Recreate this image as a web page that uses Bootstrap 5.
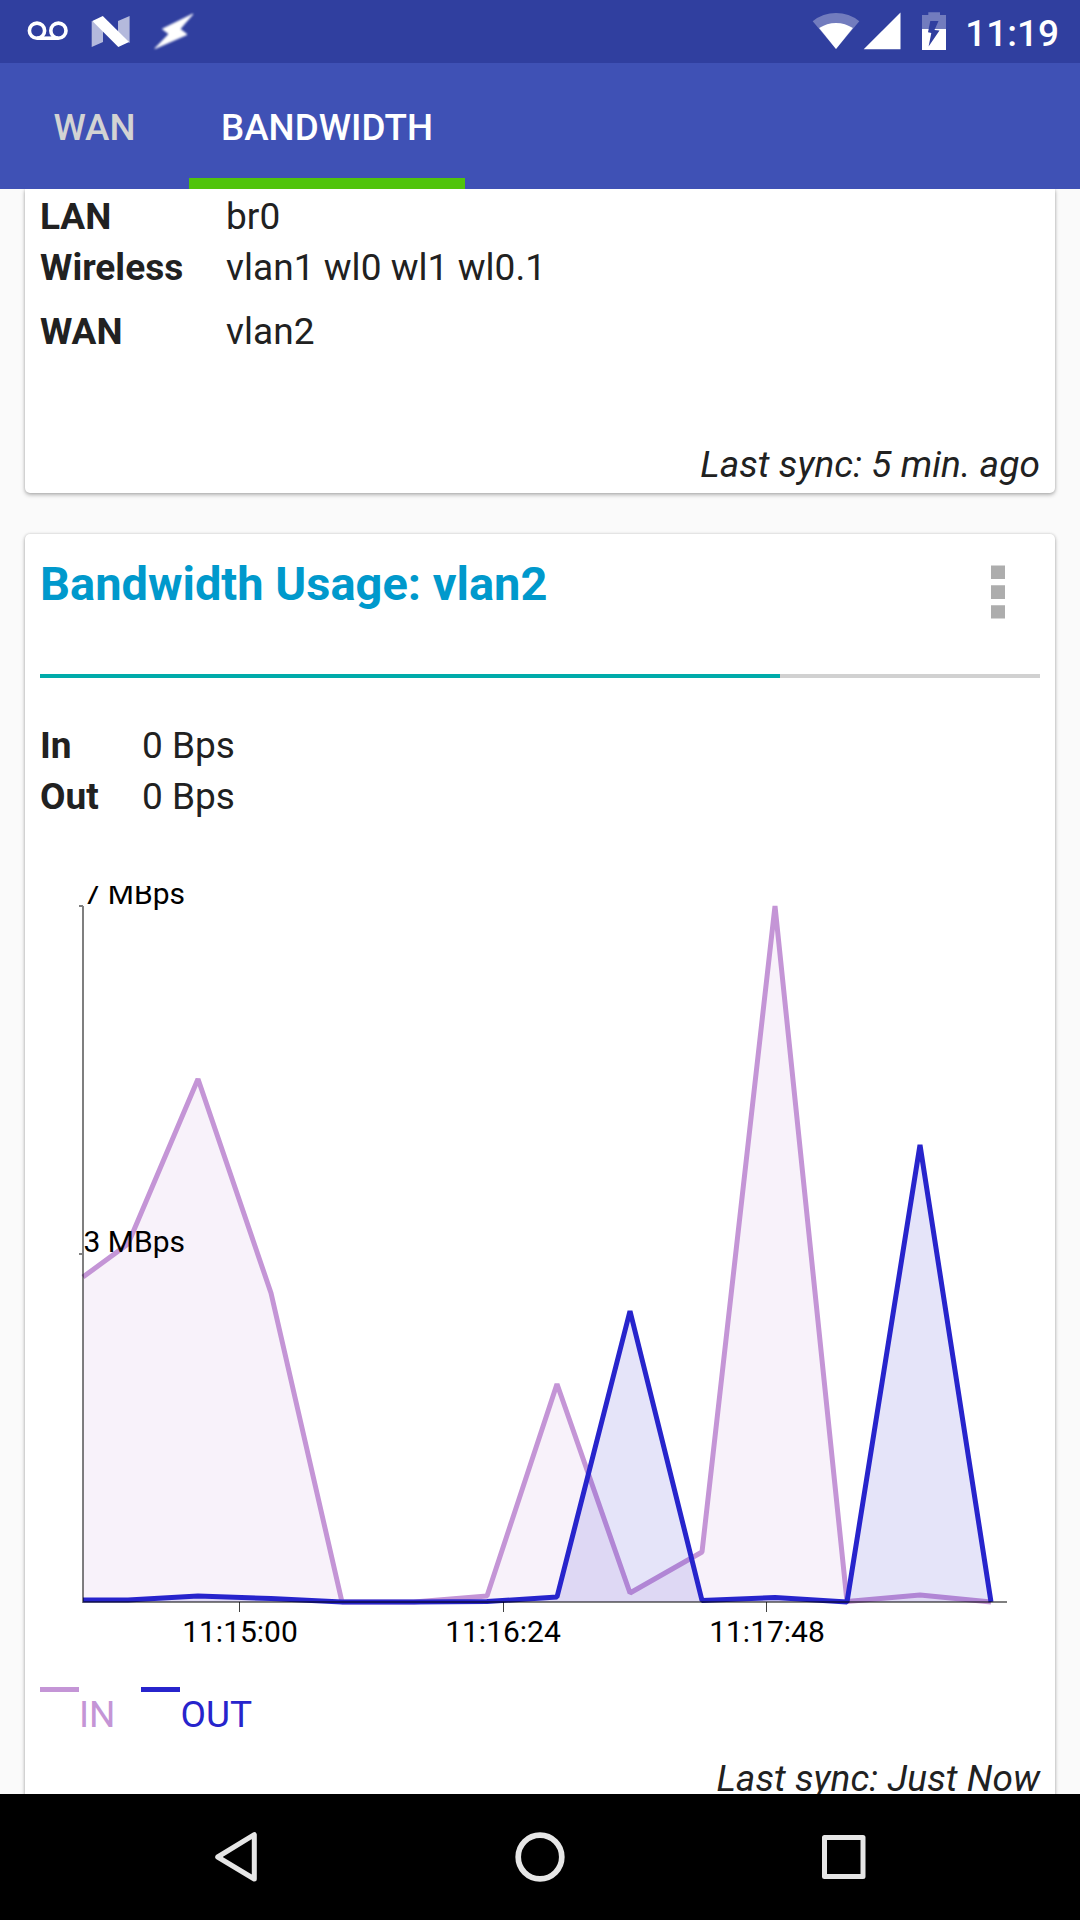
<!DOCTYPE html>
<html lang="en">
<head>
<meta charset="utf-8">
<meta name="viewport" content="width=device-width, initial-scale=1">
<title>Bandwidth</title>
<link href="https://cdn.jsdelivr.net/npm/bootstrap@5.3.0/dist/css/bootstrap.min.css" rel="stylesheet">
<style>
body{font-family:Roboto,"Noto Sans",sans-serif;font-size:37px;line-height:51px;color:#212121;background:#fafafa;height:1920px;overflow:hidden}
svg{display:block}
.statusbar{height:63px;background:#303f9f;color:#fff}
.clock{font-weight:500;font-size:37px;line-height:63px;padding:2px 21px 0 0}
.tabs{height:126px;background:#3f51b5;--bs-nav-link-padding-x:0;--bs-nav-link-padding-y:0}
.tabs .nav-link{height:126px;font-size:36.75px;line-height:129px;font-weight:500;color:#d3d3d3}
.tabs .tab-wan{width:189px;text-align:center}
.tabs .nav-link.active{width:276px;text-align:center;color:#fff;box-shadow:inset 0 -11px #50c40b}
.viewport{height:1605px;padding:0 25px}
.panel{--bs-card-border-width:0;--bs-card-border-radius:5px;border-radius:5px;color:#212121;box-shadow:0 2px 4px rgba(0,0,0,.27),0 0 3px rgba(0,0,0,.16)}
.panel-top{height:304px;border-top-left-radius:0;border-top-right-radius:0;padding:2px 15px 3px}
.panel-usage{height:1300px;margin-top:41px;padding:22px 15px 0}
.label-wide{width:186px}
.label-narrow{width:102px}
.values-wide{letter-spacing:.05px}
.row-gap-wan{margin-top:13px}
.sync-note{letter-spacing:.07px}
.panel-title{font-size:47px;line-height:56px;color:#0099cc;font-weight:700}
.menu-dots{padding:9px 35px 0 0}
.sync-bar{height:4px;margin-top:55px;--bs-progress-bg:#d1d1d1;--bs-progress-bar-bg:#00abaa;--bs-progress-border-radius:0}
.rates{margin-top:42px}
.chart{margin-top:64px}
.chart text{font-size:30px;fill:#000}
.legend-row{margin-top:27px;gap:26px}
.legend-in{color:#c495d6}
.legend-out{color:#2724cc}
.legend-swatch{width:39px;height:5px;background:currentColor}
.legend-name{line-height:51px;padding-top:2px}
.usage-note{margin-top:13px}
.navkeys{height:126px;background:#000}
</style>
<script src="https://cdn.jsdelivr.net/npm/bootstrap@5.3.0/dist/js/bootstrap.bundle.min.js"></script>
</head>
<body class="d-flex flex-column">
<header class="flex-shrink-0">
  <div class="statusbar d-flex justify-content-between">
    <svg width="220" height="63" viewBox="0 0 220 63" aria-hidden="true">
      <g fill="none" stroke="#fff" stroke-width="3.6"><circle cx="37" cy="30.7" r="7.6"/><circle cx="58.4" cy="30.7" r="7.6"/><path d="M37 38.2H58.4"/></g>
      <path d="M91.7 21L103 25V42L91.7 47zM118 21L129.6 16V43L118 35z" fill="#fff" opacity=".64"/>
      <path d="M92.3 21L102.8 16L129 42L118.3 47z" fill="#fff"/>
      <path d="M193 14L162.500 29L169 34L155 48.500L187 34.500L180 29z" fill="#fff" stroke="#fff" stroke-width="1" stroke-linejoin="round" style="filter:blur(.9px)"/>
    </svg>
    <div class="d-flex">
      <svg width="167" height="63" viewBox="798 0 167 63" aria-hidden="true">
        <path d="M836 49L812.700 21.300A36.700 36.700 0 0 1 859.300 21.300z" fill="#fff" opacity=".32"/>
        <path d="M836 49L819.100 28A30.500 30.500 0 0 1 852.900 28z" fill="#fff"/>
        <path d="M863.700 49.300H900.500V12.500z" fill="#fff"/>
        <path d="M922 29V15H928.300V12.300H940V15H946V29z" fill="#fff" opacity=".32"/>
        <path d="M922 29H946V50H922z" fill="#fff"/>
        <path d="M930.300 21H938.500L934.500 30L939.500 30.600L928.600 46.500L931.300 33L928 32.300z" fill="#303f9f"/>
      </svg>
      <div class="clock">11:19</div>
    </div>
  </div>
  <nav class="tabs nav">
    <a class="nav-link tab-wan" href="#">WAN</a>
    <a class="nav-link active" href="#">BANDWIDTH</a>
  </nav>
</header>
<main class="viewport overflow-hidden flex-shrink-0">
  <section class="panel panel-top card justify-content-between">
    <div>
      <div class="d-flex"><b class="label-wide">LAN</b><span class="values-wide">br0</span></div>
      <div class="d-flex"><b class="label-wide">Wireless</b><span class="values-wide">vlan1 wl0 wl1 wl0.1</span></div>
      <div class="d-flex row-gap-wan"><b class="label-wide">WAN</b><span class="values-wide">vlan2</span></div>
    </div>
    <div class="sync-note text-end fst-italic">Last sync: 5 min. ago</div>
  </section>
  <section class="panel panel-usage card">
    <div class="d-flex justify-content-between">
      <h1 class="panel-title m-0">Bandwidth Usage: vlan2</h1>
      <div class="menu-dots"><svg width="14" height="54" viewBox="0 0 14 54" fill="#adadad" role="img" aria-label="Menu"><path d="M0 .5H14V14H0zM0 20.200H14V34H0zM0 40.200H14V53.600H0z"/></svg></div>
    </div>
    <div class="progress sync-bar"><div class="progress-bar" style="width:74%"></div></div>
    <div class="rates">
      <div class="d-flex"><b class="label-narrow">In</b><span>0 Bps</span></div>
      <div class="d-flex"><b class="label-narrow">Out</b><span>0 Bps</span></div>
    </div>
    <svg class="chart" width="1000" height="774" viewBox="40 886 1000 774" role="img" aria-label="Bandwidth chart">
      <path d="M83 1602V1277L128 1244L198 1079L271 1293L342 1602L414 1602L487 1596L557 1384L630 1593L702 1552L775 906L847 1601.500L920 1595L991 1602z" fill="#c495d6" fill-opacity=".12"/>
      <path d="M83 1277L128 1244L198 1079L271 1293L342 1602L414 1602L487 1596L557 1384L630 1593L702 1552L775 906L847 1601.500L920 1595L991 1602" fill="none" stroke="#c495d6" stroke-width="5" stroke-linejoin="bevel"/>
      <path d="M83 1602V1600H128L198 1596L271 1598.500L342 1602H414L487 1601.500L557 1597L630 1311L702 1600.500L775 1597.500L847 1602L920 1145L991 1602z" fill="#2724cc" fill-opacity=".12"/>
      <path d="M83 1600H128L198 1596L271 1598.500L342 1602H414L487 1601.500L557 1597L630 1311L702 1600.500L775 1597.500L847 1602L920 1145L991 1602" fill="none" stroke="#2724cc" stroke-width="5" stroke-linejoin="bevel"/>
      <path d="M79 906H83M79 1254H83M83 906V1602H1007" fill="none" stroke="#000" stroke-opacity=".5" stroke-width="2"/>
      <path d="M239.500 1602V1612M503.500 1602V1612M766.500 1602V1612" stroke="#000" stroke-opacity=".75"/>
      <text x="185" y="904" text-anchor="end">7 MBps</text>
      <text x="185" y="1252" text-anchor="end">3 MBps</text>
      <g text-anchor="middle"><text x="240" y="1642">11:15:00</text><text x="503" y="1642">11:16:24</text><text x="767" y="1642">11:17:48</text></g>
    </svg>
    <div class="legend-row d-flex">
      <div class="legend-in d-flex"><span class="legend-swatch"></span><span class="legend-name">IN</span></div>
      <div class="legend-out d-flex"><span class="legend-swatch"></span><span class="legend-name">OUT</span></div>
    </div>
    <div class="sync-note usage-note text-end fst-italic">Last sync: Just Now</div>
  </section>
</main>
<footer class="navkeys flex-shrink-0">
  <svg width="1080" height="126" viewBox="0 1794 1080 126" fill="none" stroke="#e6e6e6" stroke-width="5" stroke-linejoin="round" aria-hidden="true">
    <path d="M254.300 1834.700V1879L217.700 1857z"/>
    <circle cx="540" cy="1857" r="21.800" stroke-width="5.700"/>
    <rect x="824.500" y="1837.500" width="38.500" height="39"/>
  </svg>
</footer>
</body>
</html>
